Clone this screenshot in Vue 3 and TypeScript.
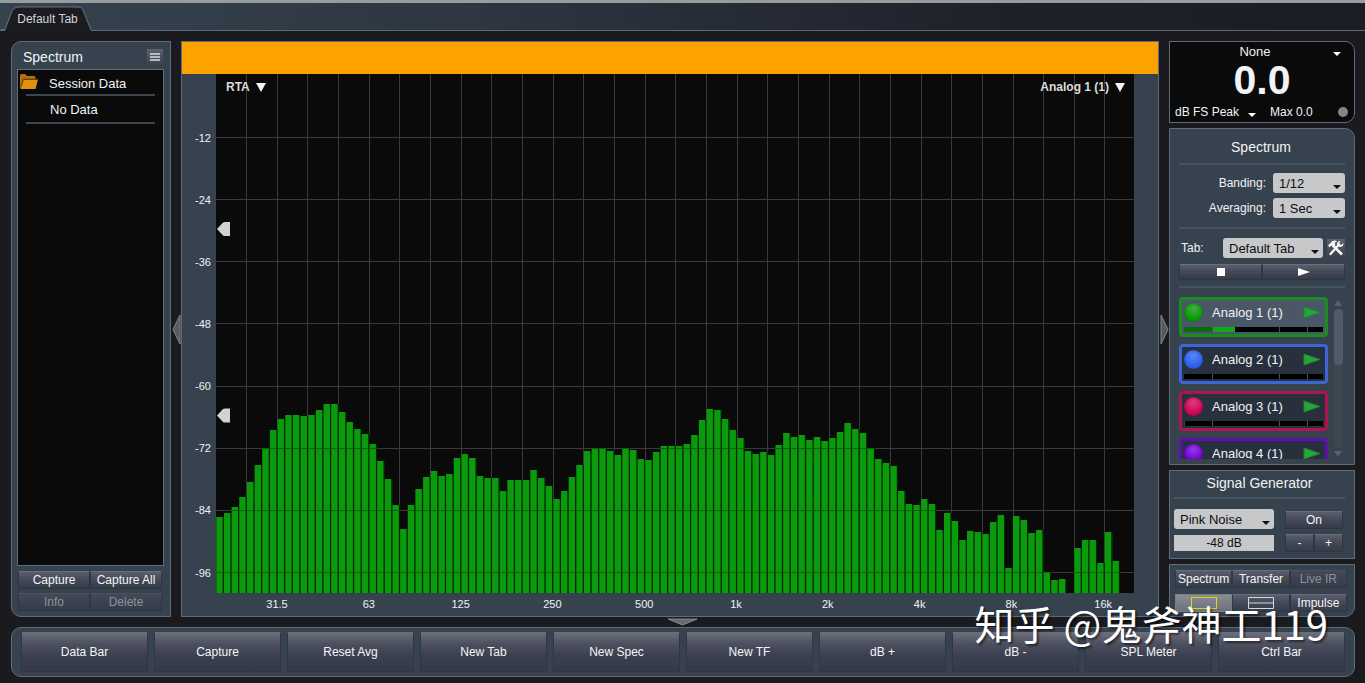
<script setup lang="ts">
import { ref } from 'vue'

interface Channel {
  name: string
  border: string
  ball: string
  level: number
}

const PLOT_W = 918
const PLOT_H = 519
const BAR_PITCH = 7.66

const levels: number[] = [
  76, 80, 86, 96, 111, 128, 145, 163, 174, 178, 178, 177, 178, 183, 189, 189, 181, 171, 164, 159,
  149, 132, 114, 88, 64, 88, 104, 116, 122, 117, 119, 135, 139, 135, 117, 115, 115, 102, 113, 113,
  113, 123, 115, 107, 94, 102, 116, 128, 142, 145, 145, 142, 138, 145, 143, 134, 133, 141, 147, 147,
  147, 149, 158, 173, 184, 183, 174, 163, 155, 142, 139, 141, 138, 148, 160, 156, 158, 153, 156, 152,
  155, 161, 170, 164, 160, 145, 134, 130, 127, 102, 89, 88, 94, 89, 63, 80, 72, 53, 62, 61,
  59, 71, 78, 25, 77, 73, 60, 63, 21, 13, 14, 0, 45, 53, 53, 30, 61, 32,
]

const px = (v: number) => `${(v / PLOT_W) * 100}%`
const py = (v: number) => `${(v / PLOT_H) * 100}%`

const bars = levels.map((h, i) => ({
  x: px(0.3 + i * BAR_PITCH),
  y: py(PLOT_H - h),
  h: py(h),
}))
const barWidth = px(6.4)
const slotWidth = px(7.7)

const vLines = Array.from({ length: 29 }, (_, k) => px(30.5 + k * 30.66))
const dbMarks = [-12, -24, -36, -48, -60, -72, -84, -96].map((db, k) => ({
  label: String(db),
  y: py(63.5 + k * 62.15),
}))
const freqMarks = ['31.5', '63', '125', '250', '500', '1k', '2k', '4k', '8k', '16k'].map((label, k) => ({
  label,
  x: px(61 + k * 91.8),
}))
const markers = [py(155), py(341.5)]

const channels: Channel[] = [
  { name: 'Analog 1 (1)', border: '#1a8c24', ball: '#0c9a0c', level: 37 },
  { name: 'Analog 2 (1)', border: '#3c66d6', ball: '#2f62f0', level: 0 },
  { name: 'Analog 3 (1)', border: '#b01450', ball: '#d2065a', level: 1 },
  { name: 'Analog 4 (1)', border: '#5c10ac', ball: '#7404d8', level: 0 },
]
const selected = ref(0)

const banding = ref('1/12')
const averaging = ref('1 Sec')
const tab = ref('Default Tab')
const noise = ref('Pink Noise')
const gain = ref('-48 dB')

const commands = ['Data Bar', 'Capture', 'Reset Avg', 'New Tab', 'New Spec', 'New TF', 'dB +', 'dB -', 'SPL Meter', 'Ctrl Bar']
</script>

<template>
  <div class="app">
    <header class="tabs">
      <button class="tab" type="button">
        <svg class="tab-shape" width="90" height="25" viewBox="0 0 90 25" aria-hidden="true">
          <path d="M4 25 L11 5 Q13 1 17 1 H77 Q81 1 82 4 L90 25 Z" fill="#1b1b20" />
          <path d="M0 23.5 H4 L11 5 Q13 1 17 1 H77 Q81 1 82 4 L90 24" fill="none" stroke="#66727e" />
        </svg>
        <span class="tab-text">Default Tab</span>
      </button>
    </header>

    <main class="main">
      <aside class="panel data">
        <div class="data-head">
          <h2 class="title">Spectrum</h2>
          <button class="menu" type="button" aria-label="Menu">
            <svg width="10" height="8" viewBox="0 0 10 8"><path d="M0 1H10M0 4H10M0 7H10" stroke="#d8dbe0" stroke-width="1.3" /></svg>
          </button>
        </div>
        <ul class="session">
          <li class="session-row">
            <svg class="folder" width="18" height="15" viewBox="0 0 18 15" aria-hidden="true">
              <path d="M0 14V1.5Q0 0 1.500 0H5L7 2H14Q15.500 2 15.500 3.500V5H3.500L1 14Z" fill="#b87008" />
              <path d="M3.500 5.500H18L15.500 15H0.500Z" fill="#dd9012" />
              <path d="M1 13L3.500 5.200H17.500" fill="none" stroke="#5f3a04" stroke-width=".8" />
            </svg>
            <span>Session Data</span>
          </li>
          <li class="session-row child"><span>No Data</span></li>
        </ul>
        <div class="pair">
          <button class="btn" type="button">Capture</button>
          <button class="btn" type="button">Capture All</button>
        </div>
        <div class="pair">
          <button class="btn" type="button" disabled>Info</button>
          <button class="btn" type="button" disabled>Delete</button>
        </div>
      </aside>

      <button class="handle" type="button" aria-label="Toggle data bar">
        <svg width="9" height="31" viewBox="0 0 9 31"><path d="M8 1V30L1 15.500Z" fill="#58585e" stroke="#84858b" /></svg>
      </button>

      <section class="panel graph">
        <div class="banner"></div>
        <div class="chart">
          <svg class="axis-y" aria-hidden="true">
            <text v-for="m in dbMarks" :key="m.label" x="29" :y="m.y" dy="4" text-anchor="end">{{ m.label }}</text>
          </svg>
          <div class="plot">
            <svg class="canvas" role="img" aria-label="RTA spectrum">
              <defs>
                <clipPath id="barArea">
                  <rect v-for="(b, i) in bars" :key="i" :x="b.x" :y="b.y" :width="slotWidth" :height="b.h" />
                </clipPath>
              </defs>
              <g class="grid">
                <line v-for="x in vLines" :key="x" :x1="x" :x2="x" y1="0" y2="100%" />
                <line v-for="m in dbMarks" :key="m.label" x1="0" x2="100%" :y1="m.y" :y2="m.y" />
              </g>
              <g class="bars">
                <rect v-for="(b, i) in bars" :key="i" class="slot" :x="b.x" :y="b.y" :width="slotWidth" :height="b.h" />
                <rect v-for="(b, i) in bars" :key="i" class="bar" :x="b.x" :y="b.y" :width="barWidth" :height="b.h" />
              </g>
              <g class="over" clip-path="url(#barArea)">
                <line v-for="m in dbMarks" :key="m.label" x1="0" x2="100%" :y1="m.y" :y2="m.y" />
              </g>
              <svg v-for="m in markers" :key="m" x="1" :y="m" overflow="visible">
                <path d="M0 0L6 -6.500Q7 -7 8 -7H13V7H8Q7 7 6 6.500Z" fill="#d2d2d2" />
              </svg>
            </svg>
            <button class="pick left" type="button">RTA <i class="tri"></i></button>
            <button class="pick right" type="button">Analog 1 (1) <i class="tri"></i></button>
          </div>
          <svg class="axis-x" aria-hidden="true">
            <text v-for="m in freqMarks" :key="m.label" :x="m.x" y="15" text-anchor="middle">{{ m.label }}</text>
          </svg>
        </div>
      </section>

      <button class="handle" type="button" aria-label="Toggle control bar">
        <svg width="9" height="31" viewBox="0 0 9 31"><path d="M1 1V30L8 15.500Z" fill="#58585e" stroke="#84858b" /></svg>
      </button>

      <aside class="side">
        <section class="panel spl">
          <button class="spl-source" type="button"><span>None</span><i class="caret"></i></button>
          <output class="spl-value">0.0</output>
          <div class="spl-foot">
            <button class="spl-type" type="button">dB FS Peak <i class="caret"></i></button>
            <span class="spl-max">Max 0.0</span>
            <i class="lamp"></i>
          </div>
        </section>

        <section class="panel spectrum">
          <h2 class="title center">Spectrum</h2>
          <hr class="rule" />
          <div class="fields">
            <label for="banding">Banding:</label>
            <span class="drop"><select id="banding" v-model="banding"><option>1/12</option></select></span>
            <label for="averaging">Averaging:</label>
            <span class="drop"><select id="averaging" v-model="averaging"><option>1 Sec</option></select></span>
          </div>
          <hr class="rule" />
          <div class="tab-row">
            <label for="tabsel">Tab:</label>
            <span class="drop"><select id="tabsel" v-model="tab"><option>Default Tab</option></select></span>
            <button class="tools" type="button" aria-label="Settings">
              <svg width="18" height="18" viewBox="0 0 18 18">
                <path d="M3.500 15L12 5.500" stroke="#f4f4f6" stroke-width="2.400" stroke-linecap="round" />
                <path d="M16.500 4L14 6L12 4.500L13.500 2Q10.500 1.500 10 4.500Q10 7.500 13 8Q16.500 8 16.500 4Z" fill="#f4f4f6" />
                <path d="M6 6.500L15 15.500" stroke="#f4f4f6" stroke-width="2.600" />
                <path d="M1 6.500L5.500 2Q8 1 10 2.500L7.500 4L8.500 5.500L6 8L4.500 6.500L2.500 8.200Z" fill="#f4f4f6" />
              </svg>
            </button>
          </div>
          <div class="transport">
            <button class="btn" type="button" aria-label="Stop"><svg width="8" height="8"><rect width="8" height="8" fill="#fff" /></svg></button>
            <button class="btn" type="button" aria-label="Play"><svg width="12" height="8"><path d="M0 0L12 4L0 8Z" fill="#fff" /></svg></button>
          </div>
          <hr class="rule" />
          <div class="channels">
            <div class="cards">
              <button
                v-for="(c, i) in channels"
                :key="c.name"
                class="card"
                :class="{ active: i === selected }"
                :style="{ borderColor: c.border }"
                type="button"
                @click="selected = i"
              >
                <span class="card-top">
                  <i class="ball" :style="{ backgroundColor: c.ball }"></i>
                  <span class="card-name">{{ c.name }}</span>
                  <svg width="18" height="13" viewBox="0 0 18 13"><path d="M1 1L17 6.500L1 12Z" fill="#22a834" stroke="#2b7e3c" /></svg>
                </span>
                <span class="meter">
                  <i class="fill" :style="{ width: c.level + '%' }"></i>
                </span>
              </button>
            </div>
            <div class="scroll">
              <svg width="8" height="6"><path d="M0 6L4 0L8 6Z" fill="#58636f" /></svg>
              <div class="track"><div class="thumb"></div></div>
              <svg width="8" height="6"><path d="M0 0L4 6L8 0Z" fill="#58636f" /></svg>
            </div>
          </div>
        </section>

        <section class="panel generator">
          <h2 class="title center">Signal Generator</h2>
          <hr class="rule" />
          <div class="gen-grid">
            <div class="gen-left">
              <span class="drop"><select v-model="noise" aria-label="Signal"><option>Pink Noise</option></select></span>
              <input v-model="gain" class="gain" type="text" aria-label="Level" />
            </div>
            <div class="gen-right">
              <button class="btn" type="button">On</button>
              <div class="steps">
                <button class="btn" type="button">-</button>
                <button class="btn" type="button">+</button>
              </div>
            </div>
          </div>
        </section>

        <section class="panel modes">
          <button class="btn" type="button">Spectrum</button>
          <button class="btn" type="button">Transfer</button>
          <button class="btn" type="button" disabled>Live IR</button>
          <button class="btn on" type="button" aria-label="Single view">
            <svg width="26" height="12"><rect x=".5" y=".5" width="25" height="11" fill="none" stroke="#e0d21e" /></svg>
          </button>
          <button class="btn" type="button" aria-label="Split view">
            <svg width="26" height="12"><path d="M.5 .5H25.500V11.500H.5ZM.5 6H25.500" fill="none" stroke="#d5d8de" /></svg>
          </button>
          <button class="btn" type="button">Impulse</button>
        </section>
      </aside>
    </main>

    <button class="handle low" type="button" aria-label="Toggle command bar">
      <svg width="31" height="8" viewBox="0 0 31 8"><path d="M1 1H30L15.500 7Z" fill="#6c6c70" stroke="#87878b" /></svg>
    </button>

    <nav class="panel commands">
      <button v-for="c in commands" :key="c" class="btn tall" type="button">{{ c }}</button>
    </nav>

    <div class="watermark">知乎 @鬼斧神工119</div>
  </div>
</template>

<style>
body {
  margin: 0;
  background: #1b1a1f;
}
</style>

<style scoped>
.app {
  position: relative;
  box-sizing: border-box;
  display: flex;
  flex-direction: column;
  min-height: 100vh;
  padding-bottom: 6px;
  background: #1b1a1f;
  color: #f1f3f5;
  font: 12px/16px "Liberation Sans", Arial, sans-serif;
}
.app *,
.app *::after {
  box-sizing: border-box;
}
button {
  margin: 0;
  padding: 0;
  border: 0;
  background: none;
  color: inherit;
  font: inherit;
}
svg {
  display: block;
}
h2,
ul {
  margin: 0;
  padding: 0;
  list-style: none;
}

.tabs {
  display: flex;
  align-items: flex-end;
  height: 31px;
  padding-left: 1px;
  border-top: 3px solid #989c9c;
  border-bottom: 1px solid #5c6874;
  background: linear-gradient(90deg, #35434e 0%, #2d3641 35%, #1e2029 75%, #1c1c24 100%);
}
.tab {
  position: relative;
  width: 90px;
  height: 24px;
  padding: 1px 0 0 3px;
}
.tab-shape {
  position: absolute;
  left: 0;
  top: 0;
}
.tab-text {
  position: relative;
  color: #d3d5d8;
}

.main {
  flex: 1;
  display: grid;
  grid-template-columns: 160px 10px minmax(0, 1fr) 10px 186px;
  padding: 10px 10px 0 11px;
}
.panel {
  border: 1px solid #5f6c79;
  background: #36424e;
}
.title {
  font-size: 14px;
  font-weight: 400;
}
.center {
  text-align: center;
}
.rule {
  width: 100%;
  height: 2px;
  margin: 0;
  border: 0;
  background: #485560;
}

.btn {
  display: flex;
  align-items: center;
  justify-content: center;
  height: 18px;
  border: 1px solid #2f3541;
  border-top-color: #6a6e7b;
  background: linear-gradient(#5b5f6d 0%, #454a58 45%, #353b49 100%);
  color: #f4f5f7;
  white-space: nowrap;
}
.btn:disabled {
  border-color: #303742;
  border-top-color: #4b525f;
  background: linear-gradient(#434955, #353c49);
  color: #8b929d;
}
.btn.on {
  border-color: #7b7f87;
  background: linear-gradient(#8a8d94, #6c7079);
}
.btn.tall {
  height: 40px;
  background: linear-gradient(#6c6d7a 0%, #4d505f 28%, #3b4050 60%, #343a4a 100%);
}

.data {
  display: flex;
  flex-direction: column;
  border-radius: 10px 0 0 10px;
  padding: 0 6px 5px 5px;
}
.data-head {
  display: flex;
  align-items: center;
  justify-content: space-between;
  height: 27px;
  padding: 2px 1px 0 6px;
}
.menu {
  display: flex;
  align-items: center;
  justify-content: center;
  width: 16px;
  height: 16px;
  background: linear-gradient(#5f6270, #3c404e);
}
.session {
  flex: 1;
  margin-bottom: 5px;
  padding: 0 8px;
  border: 1px solid #606c78;
  background: #0a0a0a;
  font-size: 13px;
}
.session-row {
  position: relative;
  height: 26px;
  padding-left: 23px;
  border-bottom: 2px solid #3b4650;
  line-height: 27px;
}
.session-row.child {
  height: 28px;
  padding-left: 24px;
}
.folder {
  position: absolute;
  left: -6px;
  top: 4px;
}
.pair {
  display: grid;
  grid-template-columns: 1fr 1fr;
  padding: 0 2px 0 1px;
}
.pair + .pair {
  margin-top: 4px;
}

.handle {
  display: flex;
  align-items: center;
  justify-content: center;
}
.handle.low {
  height: 10px;
}

.graph {
  display: flex;
  flex-direction: column;
}
.banner {
  height: 32px;
  background: #ffa200;
}
.chart {
  flex: 1;
  display: grid;
  grid-template: minmax(0, 1fr) 23px / 34px minmax(0, 1fr) 24px;
}
.axis-y {
  width: 34px;
  height: 100%;
}
.axis-x {
  grid-column: 2;
  width: 100%;
  height: 23px;
  overflow: visible;
}
.axis-y text,
.axis-x text {
  fill: #f0f2f4;
  font-size: 11px;
}
.plot {
  position: relative;
  background: #0a0a0a;
}
.canvas {
  position: absolute;
  inset: 0;
  width: 100%;
  height: 100%;
}
.grid line {
  stroke: #3a3a3a;
  shape-rendering: crispEdges;
}
.over line {
  stroke: #0a4a0a;
  stroke-opacity: 0.7;
  shape-rendering: crispEdges;
}
.slot {
  fill: #022402;
  shape-rendering: crispEdges;
}
.bar {
  fill: #0a9a0c;
}
.pick {
  position: absolute;
  top: 5px;
  display: flex;
  align-items: center;
  gap: 6px;
  color: #dcdcdc;
  font-weight: 700;
}
.pick.left {
  left: 10px;
}
.pick.right {
  right: 9px;
}
.tri {
  border: 5px solid transparent;
  border-top: 9px solid #f4f4f4;
  border-bottom: 0;
}
.caret {
  border: 4px solid transparent;
  border-top-color: #fff;
  border-bottom: 0;
}

.side {
  display: flex;
  flex-direction: column;
  gap: 5px;
}
.spl {
  display: flex;
  flex-direction: column;
  height: 82px;
  border-radius: 0 10px 10px 0;
  background: #0a0a0a;
}
.spl-source {
  display: grid;
  grid-template-columns: 1fr 34px;
  align-items: center;
  height: 20px;
  font-size: 13px;
}
.spl-source span {
  padding-left: 20px;
  text-align: center;
}
.spl-source .caret {
  justify-self: center;
  margin-top: 4px;
}
.spl-value {
  font-size: 41px;
  font-weight: 700;
  line-height: 37px;
  text-align: center;
}
.spl-foot {
  display: flex;
  align-items: center;
  height: 23px;
  padding: 3px 6px 0 5px;
}
.spl-type {
  display: flex;
  align-items: center;
  gap: 9px;
}
.spl-type .caret {
  margin-top: 5px;
}
.spl-max {
  margin-left: 14px;
}
.lamp {
  width: 10px;
  height: 10px;
  margin-left: auto;
  border-radius: 50%;
  background: #858585;
}

.spectrum {
  flex: 1;
  display: flex;
  flex-direction: column;
  padding: 0 9px 5px;
  border-radius: 0 10px 0 0;
}
.spectrum .title {
  padding: 2px 2px 0 0;
  line-height: 32px;
}
.fields {
  display: grid;
  grid-template-columns: 1fr 72px;
  align-items: center;
  justify-items: end;
  gap: 5px 7px;
  padding: 8px 0 9px;
}
.drop {
  position: relative;
  display: block;
  width: 100%;
  height: 20px;
}
.drop::after {
  content: "";
  position: absolute;
  right: 4px;
  top: 12px;
  border: 4px solid transparent;
  border-top-color: #111;
  border-bottom: 0;
  pointer-events: none;
}
select {
  display: block;
  width: 100%;
  height: 20px;
  padding: 1px 12px 0 6px;
  border: 0;
  border-radius: 3px;
  background: #c6c8ca;
  color: #0e0e10;
  font: 13px/19px "Liberation Sans", Arial, sans-serif;
  appearance: none;
}
.tab-row {
  display: grid;
  grid-template-columns: 1fr 100px 18px;
  align-items: center;
  gap: 4px;
  padding: 9px 0 6px 2px;
}
.tools {
  width: 18px;
  height: 18px;
  background: linear-gradient(#5d606e, #3b3f4d);
}
.transport {
  display: grid;
  grid-template-columns: 1fr 1fr;
  margin-bottom: 6px;
}
.transport .btn {
  height: 16px;
}
.channels {
  flex: 1 1 0;
  display: flex;
  gap: 5px;
  min-height: 0;
  margin-top: 9px;
}
.cards {
  display: flex;
  flex-direction: column;
  gap: 7px;
  width: 149px;
  overflow: hidden;
}
.card {
  flex: none;
  height: 40px;
  padding: 0 2px 2px;
  border: 3px solid;
  border-radius: 4px;
  background: #27303d;
}
.card.active {
  background: #4a5766;
}
.card-top {
  display: flex;
  align-items: center;
  height: 25px;
  padding-right: 2px;
  font-size: 13px;
}
.card-name {
  flex: 1;
  padding-left: 9px;
  text-align: left;
}
.ball {
  width: 19px;
  height: 19px;
  border-radius: 50%;
  background-image: radial-gradient(circle at 50% 30%, rgba(255, 255, 255, 0.22), transparent 60%);
  box-shadow: inset 0 0 2px rgba(0, 0, 0, 0.5);
}
.meter {
  position: relative;
  display: block;
  height: 5px;
  margin-top: 2px;
  background: #000;
}
.meter::after {
  content: "";
  position: absolute;
  inset: 0;
  background:
    linear-gradient(#4a545e, #4a545e) 20% 0 / 1px 100% no-repeat,
    linear-gradient(#4a545e, #4a545e) 69% 0 / 1px 100% no-repeat,
    linear-gradient(#4a545e, #4a545e) 89% 0 / 1px 100% no-repeat;
}
.fill {
  display: block;
  height: 5px;
  background: linear-gradient(90deg, #096a10 28px, #14a81e 28px);
}
.scroll {
  display: flex;
  flex-direction: column;
  align-items: center;
  gap: 3px;
  width: 10px;
  padding: 3px 0 2px;
}
.track {
  flex: 1;
  width: 9px;
  border-radius: 5px;
  background: #3e4650;
}
.thumb {
  height: 56px;
  border-radius: 5px;
  background: #525b68;
}

.generator {
  height: 89px;
  padding: 0 9px 0 4px;
}
.generator .title {
  padding-bottom: 2px;
  line-height: 24px;
}
.gen-grid {
  display: grid;
  grid-template-columns: 100px 58px;
  gap: 11px;
  padding-top: 10px;
}
.gen-left {
  display: grid;
  align-content: start;
  gap: 6px;
}
.gain {
  width: 100%;
  height: 16px;
  padding: 0;
  border: 0;
  background: #c6c8ca;
  color: #0e0e10;
  font: 12px/16px "Liberation Sans", Arial, sans-serif;
  text-align: center;
}
.gen-right {
  display: grid;
  align-content: start;
  gap: 5px;
  padding-top: 2px;
}
.steps {
  display: grid;
  grid-template-columns: 1fr 1fr;
}

.modes {
  display: grid;
  grid-template-columns: repeat(3, 1fr);
  align-content: start;
  gap: 6px 0;
  height: 53px;
  padding: 5px 7px 0 5px;
  border-radius: 0 0 10px 0;
}

.commands {
  display: grid;
  grid-template-columns: repeat(10, minmax(0, 1fr));
  gap: 6px;
  height: 50px;
  margin: 0 10px 0 11px;
  padding: 4px 9px;
  border-radius: 10px;
}

.watermark {
  position: absolute;
  right: 37px;
  bottom: 36px;
  color: #fff;
  font: 40px/48px "Noto Sans CJK SC", sans-serif;
  text-shadow: 2px 2px 2px rgba(0, 0, 0, 0.5);
  white-space: nowrap;
  pointer-events: none;
}
</style>
